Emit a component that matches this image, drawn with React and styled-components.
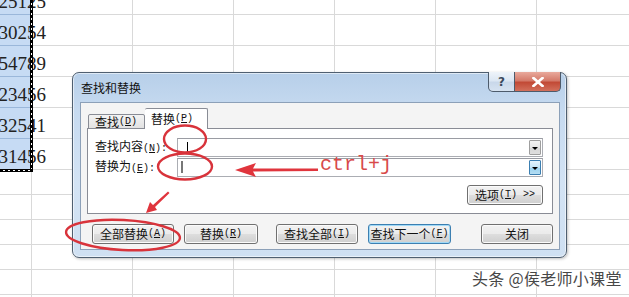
import React from "react";
import styled, { createGlobalStyle } from "styled-components";

const Global = createGlobalStyle`
  html, body { margin: 0; padding: 0; background: #fff; }
  body { width: 629px; height: 297px; overflow: hidden; position: relative; font-family: "Noto Sans CJK SC", "Noto Sans", sans-serif; }
  #root { width: 629px; height: 297px; position: relative; overflow: hidden; }
`;

const Page = styled.div`
  position: relative;
  width: 629px;
  height: 297px;
  overflow: hidden;
  background: #fff;
`;

const Sheet = styled.div`
  display: grid;
  grid-template-columns: 32px repeat(6, 101px);
  grid-template-rows: 15px repeat(5, 31px) repeat(6, 25px);
`;

const Cell = styled.div`
  box-sizing: border-box;
  border-right: 1px solid ${(p) => (p.$sel ? "transparent" : "#d9d9d9")};
  border-bottom: 1px solid ${(p) => (p.$sel ? "#9ab7da" : "#d9d9d9")};
  background: ${(p) => (p.$sel ? "#c6dbf4" : "transparent")};
  grid-column: ${(p) => p.$col};
  grid-row: ${(p) => p.$row};
  display: flex;
  justify-content: flex-end;
  align-items: flex-end;
  padding-bottom: 3px;
  overflow: visible;
  min-width: 0;
`;

const Num = styled.span`
  font-family: "Liberation Serif", "DejaVu Serif", serif;
  font-size: 19px;
  line-height: 19px;
  color: #222;
  white-space: nowrap;
  margin-right: -15px;
  position: relative;
  z-index: 1;
`;

const SelFrame = styled.div`
  grid-column: 1;
  grid-row: 1 / 7;
  position: relative;
  z-index: 2;
  pointer-events: none;
  &::before {
    content: "";
    position: absolute;
    right: -1px;
    top: 0;
    bottom: -2px;
    width: 3px;
    background: #000;
    background-image: repeating-linear-gradient(to bottom, transparent 0 3px, #fff 3px 5px);
    background-size: 1px 100%;
    background-repeat: no-repeat;
    background-position: 1px 0;
  }
  &::after {
    content: "";
    position: absolute;
    left: 0;
    right: -1px;
    bottom: -2px;
    height: 3px;
    background: #000;
    background-image: repeating-linear-gradient(to right, transparent 0 3px, #fff 3px 5px);
    background-size: 100% 1px;
    background-repeat: no-repeat;
    background-position: 0 1px;
  }
`;

const Dialog = styled.div`
  position: absolute;
  left: 72px;
  top: 72px;
  width: 495px;
  height: 186px;
  box-sizing: border-box;
  border: 1px solid #4f5f70;
  border-radius: 7px;
  background: linear-gradient(to bottom, #b7cfe9 0%, #c6daf0 20%, #d3e3f4 60%, #cfe0f2 100%);
  box-shadow: inset 0 0 0 1px rgba(255, 255, 255, 0.55), 1px 1px 3px rgba(0, 0, 0, 0.25);
  display: flex;
  flex-direction: column;
  padding: 0 6px 7px 7px;
  z-index: 5;
`;

const TitleBar = styled.div`
  height: 29px;
  display: flex;
  align-items: flex-start;
  justify-content: space-between;
`;

const Title = styled.div`
  font-size: 12px;
  line-height: 12px;
  color: #111;
  margin-top: 9px;
  margin-left: 1px;
`;

const CaptionButtons = styled.div`
  display: flex;
  margin-top: -1px;
  margin-right: -1px;
`;

const CapBtn = styled.div`
  box-sizing: border-box;
  width: ${(p) => p.$w}px;
  height: 20px;
  border: 1px solid #4d5b6b;
  border-top: none;
  border-radius: ${(p) => (p.$close ? "0 0 5px 0" : "0 0 0 5px")};
  margin-left: ${(p) => (p.$close ? "-1px" : "0")};
  background: ${(p) =>
    p.$close
      ? "linear-gradient(to bottom, #e9a99c 0%, #d47a6a 45%, #c24a36 55%, #d2705c 100%)"
      : "linear-gradient(to bottom, #eef3f9 0%, #dce7f3 45%, #c9d8ea 55%, #d6e3f1 100%)"};
  display: flex;
  align-items: center;
  justify-content: center;
  color: ${(p) => (p.$close ? "#fff" : "#3b4a5c")};
  font-family: "DejaVu Sans", sans-serif;
  font-weight: bold;
  font-size: 12px;
`;

const Client = styled.div`
  flex: 1;
  box-sizing: border-box;
  border: 1px solid #8ca0b8;
  background: #f4f4f4;
  padding: 6px 6px 5px 6px;
  display: flex;
  flex-direction: column;
`;

const Tabs = styled.div`
  display: flex;
  align-items: flex-end;
  height: 20px;
  padding-left: 1px;
  position: relative;
  z-index: 1;
  margin-bottom: -1px;
`;

const Tab = styled.div`
  box-sizing: border-box;
  height: ${(p) => (p.$active ? 21 : 15)}px;
  width: ${(p) => p.$w}px;
  border: 1px solid #898c95;
  border-bottom: ${(p) => (p.$active ? "none" : "1px solid #898c95")};
  border-left: ${(p) => (p.$first ? "1px solid #898c95" : "none")};
  background: ${(p) => (p.$active ? "#fff" : "linear-gradient(to bottom, #f3f3f3, #e2e2e2)")};
  font-size: 12px;
  line-height: 12px;
  color: #111;
  display: flex;
  align-items: ${(p) => (p.$active ? "flex-start" : "center")};
  padding-top: ${(p) => (p.$active ? "4px" : "0")};
  padding-left: 6px;
  border-radius: 2px 2px 0 0;
`;

const U = styled.span`
  text-decoration: underline;
`;

const Ascii = styled.span`
  font-family: "Liberation Mono", monospace;
  font-size: 10px;
`;

const Panel = styled.div`
  box-sizing: border-box;
  height: 86px;
  border: 1px solid #898c95;
  background: #fff;
  padding: 9px 9px 0 7px;
  display: flex;
  flex-direction: column;
`;

const FieldRow = styled.div`
  display: flex;
  align-items: center;
  margin-top: ${(p) => p.$mt || 0}px;
`;

const Label = styled.div`
  width: 82px;
  font-size: 12px;
  line-height: 12px;
  color: #111;
  white-space: nowrap;
`;

const Combo = styled.div`
  flex: 1;
  box-sizing: border-box;
  height: 19px;
  border: 1px solid #abadb3;
  border-top-color: #9a9ca3;
  background: #fff;
  display: flex;
  align-items: stretch;
  position: relative;
`;

const Caret = styled.div`
  width: ${(p) => (p.$thick ? 2 : 1)}px;
  background: ${(p) => (p.$thick ? "#777" : "#000")};
  margin: ${(p) => (p.$thick ? "2px 0 3px 3px" : "3px 0 2px 9px")};
`;

const Drop = styled.div`
  box-sizing: border-box;
  width: 12px;
  margin: 1px 1px 1px auto;
  border: 1px solid ${(p) => (p.$hot ? "#3c7fb1" : "#9e9e9e")};
  border-radius: 1px;
  background: ${(p) =>
    p.$hot
      ? "linear-gradient(to bottom, #e5f4fc 0%, #c4e5f6 50%, #98d1ef 51%, #b5def3 100%)"
      : "linear-gradient(to bottom, #f3f3f3 0%, #e6e6e6 50%, #d6d6d6 51%, #dedede 100%)"};
  display: flex;
  align-items: center;
  justify-content: center;
  &::after {
    content: "";
    border-left: 3px solid transparent;
    border-right: 3px solid transparent;
    border-top: 3px solid #000;
    margin-top: 1px;
  }
`;

const OptionsRow = styled.div`
  display: flex;
  justify-content: flex-end;
  margin-top: 8px;
`;

const Btn = styled.div`
  box-sizing: border-box;
  width: ${(p) => p.$w}px;
  height: 20px;
  margin-left: ${(p) => p.$ml || 0}px;
  border: 1px solid ${(p) => (p.$focus ? "#3c7fb1" : "#707070")};
  border-radius: 3px;
  background: linear-gradient(to bottom, #f2f2f2 0%, #ebebeb 48%, #dddddd 52%, #cfcfcf 100%);
  box-shadow: inset 0 0 0 1px ${(p) => (p.$focus ? "#9fd9f7" : "#fbfbfb")};
  font-size: 12px;
  line-height: 12px;
  color: #111;
  display: flex;
  align-items: center;
  justify-content: center;
  white-space: nowrap;
`;

const ButtonRow = styled.div`
  display: flex;
  margin-top: 10px;
`;

const Overlay = styled.svg`
  position: absolute;
  left: 0;
  top: 0;
  z-index: 10;
  pointer-events: none;
`;

const CtrlText = styled.div`
  position: absolute;
  left: 320px;
  top: 155px;
  z-index: 11;
  font-family: "Liberation Mono", "DejaVu Sans Mono", monospace;
  font-size: 20px;
  line-height: 20px;
  color: #d84a4a;
  white-space: nowrap;
`;

const Watermark = styled.div`
  position: absolute;
  left: 472px;
  top: 268px;
  z-index: 11;
  font-size: 16px;
  line-height: 20px;
  color: #474747;
  letter-spacing: 0.3px;
  white-space: nowrap;
  text-shadow: 0 0 2px #fff, 0 0 2px #fff;
`;

const nums = ["25125", "30254", "54789", "23456", "32541", "31456"];

export default function App() {
  const cells = [];
  for (let r = 1; r <= 12; r++) {
    for (let c = 1; c <= 7; c++) {
      const sel = c === 1 && r <= 6;
      cells.push(
        <Cell key={`${r}-${c}`} $row={r} $col={c} $sel={sel}>
          {sel ? <Num>{nums[r - 1]}</Num> : null}
        </Cell>
      );
    }
  }
  return (
    <Page>
      <Global />
      <Sheet>
        {cells}
        <SelFrame />
      </Sheet>

      <Dialog>
        <TitleBar>
          <Title>查找和替换</Title>
          <CaptionButtons>
            <CapBtn $w={27}>?</CapBtn>
            <CapBtn $w={47} $close>
              <svg width="12" height="10" viewBox="0 0 12 10">
                <path d="M1.5 1 L10.5 9 M10.5 1 L1.5 9" stroke="#fff" strokeWidth="2.6" strokeLinecap="square" />
              </svg>
            </CapBtn>
          </CaptionButtons>
        </TitleBar>
        <Client>
          <Tabs>
            <Tab $w={57} $first>
              查找<Ascii>(<U>D</U>)</Ascii>
            </Tab>
            <Tab $w={63} $active>
              替换<Ascii>(<U>P</U>)</Ascii>
            </Tab>
          </Tabs>
          <Panel>
            <FieldRow>
              <Label>
                查找内容<Ascii>(<U>N</U>):</Ascii>
              </Label>
              <Combo>
                <Caret />
                <Drop />
              </Combo>
            </FieldRow>
            <FieldRow $mt={1}>
              <Label>
                替换为<Ascii>(<U>E</U>):</Ascii>
              </Label>
              <Combo>
                <Caret $thick />
                <Drop $hot />
              </Combo>
            </FieldRow>
            <OptionsRow>
              <Btn $w={76}>
                选项<Ascii>(<U>T</U>) &gt;&gt;</Ascii>
              </Btn>
            </OptionsRow>
          </Panel>
          <ButtonRow>
            <Btn $w={83} $ml={5}>
              全部替换<Ascii>(<U>A</U>)</Ascii>
            </Btn>
            <Btn $w={75} $ml={10}>
              替换<Ascii>(<U>R</U>)</Ascii>
            </Btn>
            <Btn $w={83} $ml={18}>
              查找全部<Ascii>(<U>I</U>)</Ascii>
            </Btn>
            <Btn $w={84} $ml={10} $focus>
              查找下一个<Ascii>(<U>F</U>)</Ascii>
            </Btn>
            <Btn $w={73} $ml={30}>
              关闭
            </Btn>
          </ButtonRow>
        </Client>
      </Dialog>

      <Overlay width="629" height="297" viewBox="0 0 629 297">
        <g fill="none" stroke="#d8333b" strokeWidth="2.4">
          <ellipse cx="185" cy="139" rx="21" ry="13.5" />
          <ellipse cx="185" cy="166.5" rx="27" ry="13" />
          <ellipse cx="123" cy="235" rx="57" ry="15" transform="rotate(3 123 235)" />
        </g>
        <g fill="#e0353d">
          <polygon points="235,170 256,163 253,168.5 318,168.5 318,171 253,171.5 256,177" />
          <polygon points="146,213 150,202 153,205 168,191.5 169.5,193 155,207 157,210" />
        </g>
      </Overlay>
      <CtrlText>ctrl+j</CtrlText>
      <Watermark>头条 @侯老师小课堂</Watermark>
    </Page>
  );
}
